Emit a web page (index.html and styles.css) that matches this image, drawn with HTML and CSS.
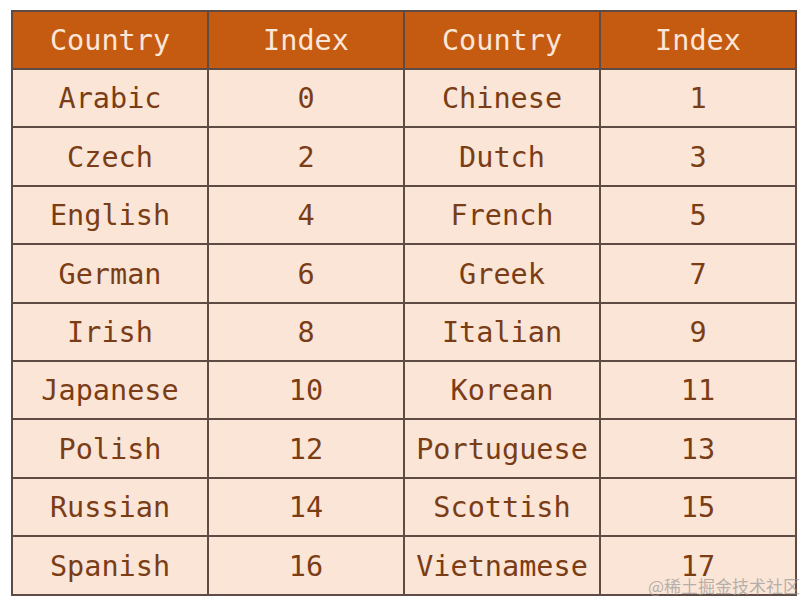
FILE: index.html
```html
<!DOCTYPE html>
<html>
<head>
<meta charset="utf-8">
<link rel="stylesheet" href="styles.css">
</head>
<body>
<div class="page">
<table class="grid">
<colgroup><col class="c"><col class="c"><col class="c"><col class="c"></colgroup>
<thead>
<tr><th>Country</th><th>Index</th><th>Country</th><th>Index</th></tr>
</thead>
<tbody>
<tr><td>Arabic</td><td>0</td><td>Chinese</td><td>1</td></tr>
<tr><td>Czech</td><td>2</td><td>Dutch</td><td>3</td></tr>
<tr><td>English</td><td>4</td><td>French</td><td>5</td></tr>
<tr><td>German</td><td>6</td><td>Greek</td><td>7</td></tr>
<tr><td>Irish</td><td>8</td><td>Italian</td><td>9</td></tr>
<tr><td>Japanese</td><td>10</td><td>Korean</td><td>11</td></tr>
<tr><td>Polish</td><td>12</td><td>Portuguese</td><td>13</td></tr>
<tr><td>Russian</td><td>14</td><td>Scottish</td><td>15</td></tr>
<tr><td>Spanish</td><td>16</td><td>Vietnamese</td><td>17</td></tr>
</tbody>
</table>
<div class="watermark">@稀土掘金技术社区</div>
</div>
</body>
</html>
```
FILE: styles.css
```css
html, body {
  margin: 0;
  padding: 0;
  background: #ffffff;
}
.page {
  position: relative;
  width: 804px;
  height: 602px;
  padding: 10px 0 0 11px;
  box-sizing: border-box;
}
.grid {
  border-collapse: collapse;
  table-layout: fixed;
  font-family: "DejaVu Sans Mono", "Liberation Mono", monospace;
  font-size: 28.5px;
  border: 2px solid #5e4c44;
}
.grid .c {
  width: 196px;
}
.grid th,
.grid td {
  border: 2px solid #5e4c44;
  text-align: center;
  vertical-align: middle;
  padding: 3px 0 0 0;
  line-height: 1;
}
.grid th {
  background: #c55a11;
  color: #fbe6d8;
  font-weight: normal;
  height: 53px;
}
.grid td {
  background: #fbe5d7;
  color: #7a3d16;
  height: 53.4px;
}
.watermark {
  position: absolute;
  right: 4px;
  bottom: 8px;
  font-family: "Noto Sans CJK SC", sans-serif;
  font-size: 17px;
  color: rgba(150, 150, 150, 0.7);
  line-height: 1;
}
```
